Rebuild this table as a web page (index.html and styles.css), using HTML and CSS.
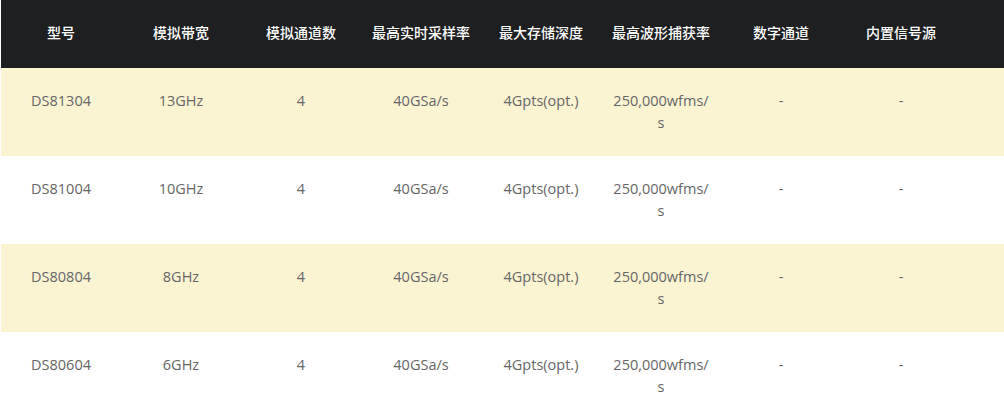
FILE: index.html
```html
<!DOCTYPE html>
<html lang="zh-CN">
<head>
<meta charset="utf-8">
<link rel="stylesheet" href="styles.css">
</head>
<body>
<div class="wrap">
<table class="spec">
  <colgroup>
    <col class="c"><col class="c"><col class="c"><col class="c"><col class="c"><col class="c"><col class="c"><col class="c"><col>
  </colgroup>
  <thead>
    <tr>
      <th>型号</th><th>模拟带宽</th><th>模拟通道数</th><th>最高实时采样率</th><th>最大存储深度</th><th>最高波形捕获率</th><th>数字通道</th><th>内置信号源</th><th></th>
    </tr>
  </thead>
  <tbody>
    <tr class="odd">
      <td>DS81304</td><td>13GHz</td><td>4</td><td>40GSa/s</td><td>4Gpts(opt.)</td><td>250,000wfms/s</td><td>-</td><td>-</td><td></td>
    </tr>
    <tr>
      <td>DS81004</td><td>10GHz</td><td>4</td><td>40GSa/s</td><td>4Gpts(opt.)</td><td>250,000wfms/s</td><td>-</td><td>-</td><td></td>
    </tr>
    <tr class="odd">
      <td>DS80804</td><td>8GHz</td><td>4</td><td>40GSa/s</td><td>4Gpts(opt.)</td><td>250,000wfms/s</td><td>-</td><td>-</td><td></td>
    </tr>
    <tr>
      <td>DS80604</td><td>6GHz</td><td>4</td><td>40GSa/s</td><td>4Gpts(opt.)</td><td>250,000wfms/s</td><td>-</td><td>-</td><td></td>
    </tr>
  </tbody>
</table>
</div>
</body>
</html>
```

FILE: styles.css
```css
html, body {
  margin: 0;
  padding: 0;
  background: #ffffff;
}
.wrap {
  padding-left: 1px;
  overflow: hidden;
}
.spec {
  width: 1003px;
  table-layout: fixed;
  border-collapse: collapse;
  font-family: "Open Sans", "Noto Sans CJK SC", sans-serif;
}
.spec col.c {
  width: 120px;
}
.spec th {
  background: #1e1f21;
  color: #ffffff;
  font-family: "Noto Sans CJK SC", sans-serif;
  font-weight: 500;
  font-size: 14px;
  line-height: 22px;
  padding: 21px 10px 25px;
  text-align: center;
  vertical-align: middle;
}
.spec td {
  color: #666666;
  font-size: 14.5px;
  line-height: 22px;
  padding: 22px 10px;
  text-align: center;
  vertical-align: top;
  word-break: break-all;
  background: #ffffff;
}
.spec tr.odd td {
  background: #fbf4d3;
}
```
